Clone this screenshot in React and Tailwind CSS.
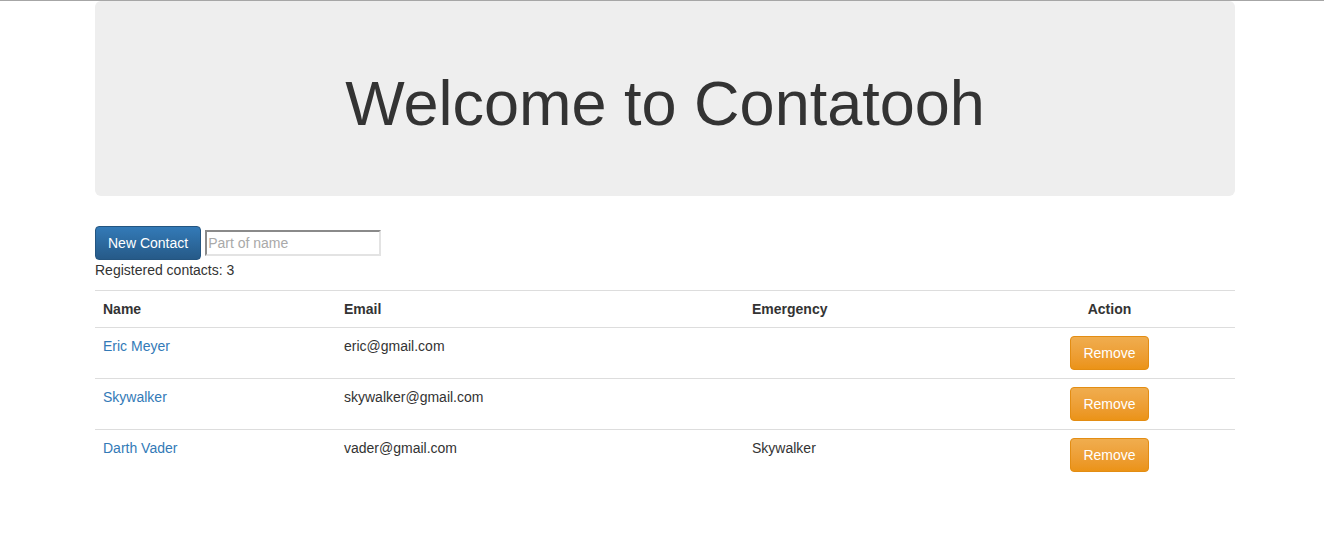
const contacts = [
  { name: "Eric Meyer", email: "eric@gmail.com", emergency: "" },
  { name: "Skywalker", email: "skywalker@gmail.com", emergency: "" },
  { name: "Darth Vader", email: "vader@gmail.com", emergency: "Skywalker" },
];

export default function App() {
  return (
    <div className="min-h-[546px] bg-white border-t border-[#a6a6a6] text-[14px] leading-[20px] text-[#333] font-['Liberation_Sans',Arial,sans-serif]">
      <div className="ml-[95px] w-[1140px]">
        <div className="rounded-[6px] bg-[#eee] pt-[48px] pb-[48px] px-[60px] mb-[30px]">
          <h1 className="mt-[20px] mb-[10px] text-center text-[63px] leading-[1.1] font-normal text-[#333]">
            Welcome to Contatooh
          </h1>
        </div>

        <div className="flex items-center">
          <button
            type="button"
            className="h-[34px] px-[12px] rounded-[4px] border border-[#245580] bg-gradient-to-b from-[#337ab7] to-[#265a88] text-white text-[14px]"
          >
            New Contact
          </button>
          <input
            type="text"
            placeholder="Part of name"
            className="ml-[4px] h-[26px] w-[176px] px-[1px] border-2 border-t-[#8a8a8a] border-l-[#8a8a8a] border-r-[#e3e3e3] border-b-[#e3e3e3] text-[14px] placeholder:text-[#a9a9a9] outline-none"
          />
        </div>
        <p className="mb-[10px]">Registered contacts: 3</p>

        <table className="w-full border-collapse">
          <thead>
            <tr className="border-t border-b border-[#ddd]">
              <th className="w-[241px] p-[8px] text-left font-bold">Name</th>
              <th className="w-[408px] p-[8px] text-left font-bold">Email</th>
              <th className="w-[240px] p-[8px] text-left font-bold">Emergency</th>
              <th className="p-[8px] text-center font-bold">Action</th>
            </tr>
          </thead>
          <tbody>
            {contacts.map((c) => (
              <tr key={c.name} className="border-t border-[#ddd] align-top">
                <td className="p-[8px]">
                  <a href="#" className="text-[#337ab7]">{c.name}</a>
                </td>
                <td className="p-[8px]">{c.email}</td>
                <td className="p-[8px]">{c.emergency}</td>
                <td className="p-[8px] text-center">
                  <button
                    type="button"
                    className="h-[34px] px-[12px] rounded-[4px] border border-[#e38d13] bg-gradient-to-b from-[#f0ad4e] to-[#eb9316] text-white text-[14px]"
                  >
                    Remove
                  </button>
                </td>
              </tr>
            ))}
          </tbody>
        </table>
      </div>
    </div>
  );
}
